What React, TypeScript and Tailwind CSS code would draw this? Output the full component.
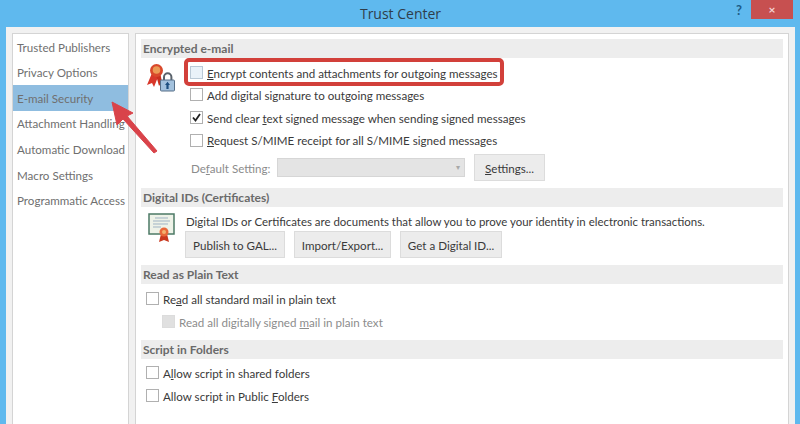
const navItems = [
  "Trusted Publishers",
  "Privacy Options",
  "E-mail Security",
  "Attachment Handling",
  "Automatic Download",
  "Macro Settings",
  "Programmatic Access",
];

function SectionHeader({ title }: { title: string }) {
  return (
    <div className="h-[19px] bg-[#ededed] pl-[2px] text-[12px] leading-[19px] font-bold text-[#6a6a6a]">
      {title}
    </div>
  );
}

function Check({ checked, disabled, tint }: { checked?: boolean; disabled?: boolean; tint?: boolean }) {
  return (
    <span
      className={
        disabled
          ? "flex h-[13px] w-[13px] shrink-0 border border-[#dcdcdc] bg-[#e0e0e0]"
          : tint
            ? "flex h-[13px] w-[13px] shrink-0 border border-[#b9c9d6] bg-[#e9f2f9]"
            : "flex h-[13px] w-[13px] shrink-0 items-center justify-center border border-[#b0b0b0] bg-white"
      }
    >
      {checked && (
        <svg width="9" height="9" viewBox="0 0 9 9">
          <path d="M1 4.5 L3.5 7.5 L8 1" fill="none" stroke="#222" strokeWidth="1.8" />
        </svg>
      )}
    </span>
  );
}

function Option({
  label,
  checked,
  disabled,
  tint,
  className,
}: {
  label: React.ReactNode;
  checked?: boolean;
  disabled?: boolean;
  tint?: boolean;
  className?: string;
}) {
  return (
    <div className={"flex h-[23px] items-center gap-[4px] whitespace-nowrap " + (className ?? "")}>
      <Check checked={checked} disabled={disabled} tint={tint} />
      <span className={disabled ? "pt-[2px] text-[#8c8c8c]" : "pt-[2px] text-[#3a3a3a]"}>{label}</span>
    </div>
  );
}

function Btn({ label, width }: { label: React.ReactNode; width: string }) {
  return (
    <div
      className={
        "flex h-[27px] items-center justify-center border border-[#dcdcdc] bg-[#ececec] pt-[2px] whitespace-nowrap text-[#3a3a3a] " +
        width
      }
    >
      {label}
    </div>
  );
}

function SealLock() {
  return (
    <svg width="30" height="29" viewBox="0 0 30 29" className="shrink-0">
      <path d="M5 10 L0 22 L5 20 L7 24 L11 14 Z" fill="#d8372a" />
      <path d="M9 12 L12 23 L15 19 L13 9 Z" fill="#c9301f" />
      <circle cx="9.5" cy="7.5" r="6.5" fill="#d9482b" />
      <circle cx="9.5" cy="7" r="3.8" fill="#eb9a55" />
      <path d="M17 17 V14 a3.7 3.7 0 0 1 7.4 0 V17" fill="none" stroke="#5a626b" strokeWidth="2" />
      <rect x="13.5" y="17" width="14" height="11" rx="1" fill="#a3c2de" stroke="#566f88" />
      <path d="M20.5 18.8 L23 22 H21.6 V26 H19.4 V22 H18 Z" fill="#1d4f80" />
    </svg>
  );
}

function Certificate() {
  return (
    <svg width="28" height="30" viewBox="0 0 28 30" className="shrink-0">
      <rect x="1" y="1" width="25" height="20" fill="#eef2e8" stroke="#4c7a66" strokeWidth="1.5" />
      <path d="M7 5 H20 M5 8 H22 M5 11 H20 M5 14 H13" stroke="#9fb3c4" strokeWidth="1" />
      <path d="M13 21 L11 29 L16 27 L21 29 L19 21 Z" fill="#c9381f" />
      <circle cx="16" cy="19" r="4.5" fill="#e8683a" />
      <circle cx="16" cy="19" r="2" fill="#f3b26f" />
    </svg>
  );
}

export default function App() {
  return (
    <div
      className="relative flex h-[424px] w-[800px] flex-col overflow-hidden bg-[#5fb9ee] text-[11.6px] text-[#3a3a3a]"
      style={{ fontFamily: 'Lato, "Open Sans", sans-serif' }}
    >
      {/* title bar */}
      <div className="flex h-[27px] shrink-0">
        <div
          className="flex-1 pt-[4px] pl-[66px] text-center text-[14px] leading-[20px] text-[#2f3d4a]"
          style={{ fontFamily: '"Open Sans", sans-serif' }}
        >
          Trust Center
        </div>
        <div className="w-[16px] pt-[3px] pl-[1px] text-[13px] leading-[14px] font-bold text-[#1d5c86]">?</div>
        <div className="mr-[7px] flex h-[19px] w-[42px] items-center justify-center bg-[#c75050] text-[12px] font-bold text-[#f4d3d3]">
          ×
        </div>
      </div>

      {/* dialog body */}
      <div className="mr-[5px] ml-[6px] flex min-h-0 flex-1 gap-[6px] bg-[#f1f1f1] pt-[6px] pl-[6px]">
        <div className="w-[117px] shrink-0 border border-b-0 border-[#d4d4d4] bg-white">
          {navItems.map((item) => (
            <div
              key={item}
              className={
                "flex h-[25.6px] items-center pt-[1px] pl-[4px] whitespace-nowrap text-[#6f6f6f] " +
                (item === "E-mail Security" ? "bg-[#8fbde0]" : "")
              }
            >
              {item}
            </div>
          ))}
        </div>

        <div className="mr-[6px] flex-1 border border-b-0 border-[#d4d4d4] bg-white px-[5px] pt-[5px]">
          <SectionHeader title="Encrypted e-mail" />
          <div className="flex pt-[3px]">
            <div className="w-[49px] shrink-0 pt-[2px] pl-[6px]">
              <SealLock />
            </div>
            <div className="flex-1">
              <div className="flex flex-col [&>div]:h-[22.6px]">
                <Option label={<><u>E</u>ncrypt contents and attachments for outgoing messages</>} tint />
                <Option label="Add digital signature to outgoing messages" />
                <Option label={<>Send clear <u>t</u>ext signed message when sending signed messages</>} checked />
                <Option label={<><u>R</u>equest S/MIME receipt for all S/MIME signed messages</>} />
              </div>
              <div className="mt-[3px] flex h-[26px] items-center">
                <span className="w-[87px] pt-[2px] pl-[1px] text-[#8c8c8c]">
                  De<u>f</u>ault Setting:
                </span>
                <div className="flex h-[19px] w-[188px] items-center justify-end border border-[#d6d6d6] bg-[#e4e4e4] pr-[4px] text-[8px] text-[#a8a8a8]">
                  ▾
                </div>
                <div className="ml-[9px]">
                  <Btn label={<><u>S</u>ettings...</>} width="w-[71px]" />
                </div>
              </div>
            </div>
          </div>

          <div className="mt-[8px]">
            <SectionHeader title="Digital IDs (Certificates)" />
          </div>
          <div className="flex pt-[4px]">
            <div className="w-[44px] shrink-0 pt-[2px] pl-[7px]">
              <Certificate />
            </div>
            <div className="flex-1">
              <div className="ml-[1px] h-[20px] pt-[1px] text-[11.45px] leading-[20px] whitespace-nowrap">
                Digital IDs or Certificates are documents that allow you to prove your identity in electronic transactions.
              </div>
              <div className="flex gap-[9px]">
                <Btn label="Publish to GAL..." width="w-[100px]" />
                <Btn label="Import/Export..." width="w-[97px]" />
                <Btn label="Get a Digital ID..." width="w-[102px]" />
              </div>
            </div>
          </div>

          <div className="mt-[7px]">
            <SectionHeader title="Read as Plain Text" />
          </div>
          <div className="pt-[3px] pl-[5px]">
            <Option label={<>Re<u>a</u>d all standard mail in plain text</>} />
            <Option label={<>Read all digitally signed <u>m</u>ail in plain text</>} disabled className="pl-[16px]" />
          </div>

          <div className="mt-[7px]">
            <SectionHeader title="Script in Folders" />
          </div>
          <div className="pt-[2px] pl-[5px]">
            <Option label={<>A<u>l</u>low script in shared folders</>} />
            <Option label={<>Allow script in Public <u>F</u>olders</>} />
          </div>
        </div>
      </div>

      {/* annotations over the screenshot */}
      <div className="absolute top-[58px] left-[184px] h-[28px] w-[320px] rounded-[5px] border-[4px] border-[#d2403a]" />
      <svg className="absolute top-[98px] left-[108px]" width="54" height="58" viewBox="0 0 54 58">
        <path d="M4 4 L9 27 L15 21 L46 55 L49 53 L19 18 L25 15 Z" fill="#d9434a" stroke="#d9434a" strokeWidth="1" />
      </svg>
    </div>
  );
}
